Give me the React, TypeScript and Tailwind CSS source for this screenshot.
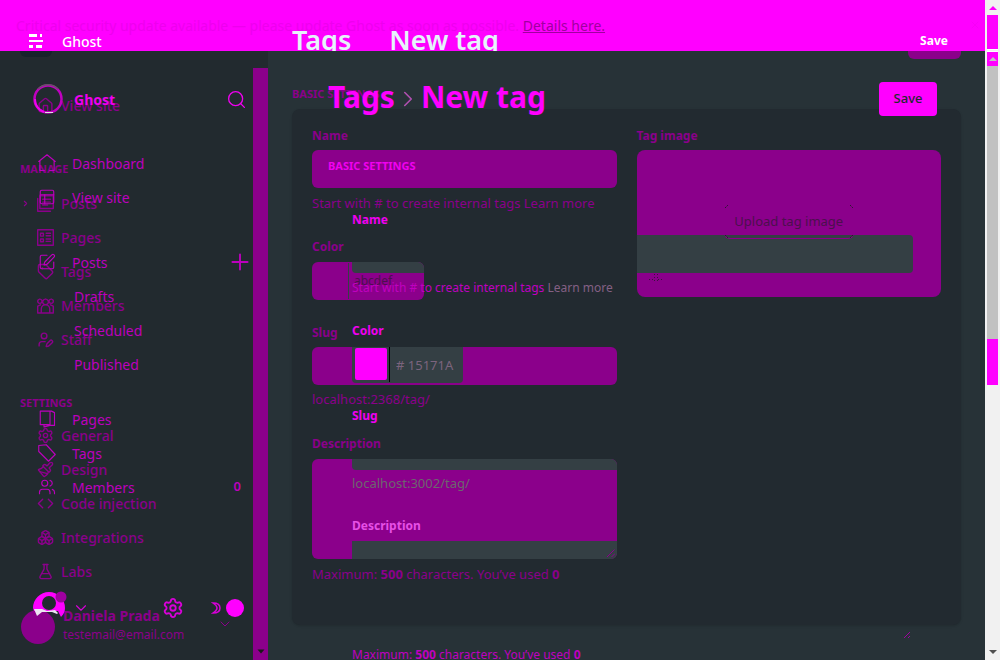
import type { ComponentType, ReactNode } from "react";
import {
  Boxes,
  ChevronDown,
  ChevronRight,
  Code,
  FlaskConical,
  House,
  Paintbrush,
  PanelsTopLeft,
  Plus,
  Search,
  Settings,
  SquarePen,
  Tag,
  UserPen,
  Users,
  X,
} from "lucide-react";

type IconProps = { size?: number; strokeWidth?: number; className?: string };
type Item = { label: string; Icon?: ComponentType<IconProps>; chevron?: boolean; extra?: ReactNode };

function glyph(d: string): ComponentType<IconProps> {
  return function Glyph({ size = 16, strokeWidth = 1.5, className }: IconProps) {
    return (
      <svg
        width={size}
        height={size}
        viewBox="0 0 24 24"
        fill="none"
        stroke="currentColor"
        strokeWidth={strokeWidth}
        strokeLinejoin="round"
        strokeLinecap="round"
        className={className}
      >
        <path d={d} />
      </svg>
    );
  };
}

const HomeOutline = glyph("M1 10 12 1l11 9M2.500 9v13h6M21.500 9v13h-6");
const PagesOutline = glyph("M3 1.500h13v18H3zM8 1.500h10l4 2v17h-5M8 19.500v3l8-2");
const TagOutline = glyph("M1 2 11 1l12 13-9 9L1 10z");
const PostStack = glyph("M4 1h19v18H4zM1 5v18h18M8 6h11M8 10h11M8 14h7");
const FramedList = glyph("M1 1h22v22H1zM5 6h4v4H5zM5 14h4v4H5zM13 6h6M13 9.500h6M13 14h6M13 17.500h6");
const Crowd = glyph(
  "M12 3a4 4 0 1 0 .1 0M4 3a3 3 0 1 0 .1 0M20 3a3 3 0 1 0 .1 0M6 22v-5a6 6 0 0 1 12 0v5M1 22V13l4-2M23 22V13l-4-2M1 22.500h22"
);

const manage: Item[] = [
  { label: "Posts", Icon: PostStack, chevron: true },
  { label: "Pages", Icon: FramedList },
  { label: "Tags", Icon: Tag },
  { label: "Members", Icon: Crowd },
  { label: "Staff", Icon: UserPen },
];

const settings: Item[] = [
  { label: "General", Icon: Settings },
  { label: "Design", Icon: Paintbrush },
  { label: "Code injection", Icon: Code },
  { label: "Integrations", Icon: Boxes },
  { label: "Labs", Icon: FlaskConical },
];

const posts: Item[] = [
  { label: "Posts", Icon: SquarePen, extra: <Plus size={26} strokeWidth={1.75} className="-mr-1" /> },
  { label: "Drafts" },
  { label: "Scheduled" },
  { label: "Published" },
];

const library: Item[] = [
  { label: "Pages", Icon: PagesOutline },
  { label: "Tags", Icon: TagOutline },
  { label: "Members", Icon: Users, extra: <span className="pr-2 text-[13px] font-semibold">0</span> },
];

function BackRow({ label, Icon, chevron }: Item) {
  return (
    <a href="#" className="flex h-[34px] items-center pl-[21px] text-[14px] font-medium">
      <span className="w-4">{chevron && <ChevronRight size={9} strokeWidth={3} />}</span>
      {Icon && <Icon size={17} strokeWidth={2} />}
      <span className="pl-[7px]">{label}</span>
    </a>
  );
}

function FrontRow({ label, Icon, extra }: Item) {
  return (
    <div className="flex h-[34px] items-center justify-between pr-1 pl-[38px]">
      <a href="#" className="flex items-center text-[14px]">
        {Icon ? <Icon size={18} strokeWidth={1.5} className="mr-4" /> : <span className="w-9" />}
        {label}
      </a>
      {extra}
    </div>
  );
}

function Banner() {
  return (
    <div className="grid h-[51px] grid-cols-1 overflow-hidden bg-[#ff00ff]">
      <div className="flex h-[50px] items-center justify-between pr-1 pl-4 text-[14px] text-[#ee00ee] [grid-area:1/1]">
        <p className="whitespace-nowrap">
          Critical security update available — please update Ghost as soon as possible.{" "}
          <a href="#" className="text-[#a000a0] underline">
            Details here.
          </a>
        </p>
        <button aria-label="Dismiss">
          <X size={12} strokeWidth={1} />
        </button>
      </div>
      <header className="flex items-start text-white [grid-area:1/1]">
        <div className="flex h-5 w-[292px] items-center gap-[19px] pl-7 text-[14px] font-medium mt-[31px]">
          <svg width="15" height="14" viewBox="0 0 15 14" fill="currentColor">
            <path d="M1 0h8v3H1zM12 0h2v3h-2zM1 6h14v2H1zM1 11h4v3H1zM8 11h6v3H8z" />
          </svg>
          <span>Ghost</span>
        </div>
        <h1 className="flex grow gap-[38px] pt-[23px] text-[27px] leading-[34px] font-semibold text-[#e6f3fa]">
          <span>Tags</span>
          <span>New tag</span>
        </h1>
        <button className="mt-[31px] mr-6 h-5 w-[54px] text-[12px] leading-5 font-bold">Save</button>
      </header>
    </div>
  );
}

function BackSidebar() {
  return (
    <aside className="flex w-[268px] shrink-0 justify-between bg-[#222a2f] text-[#8b008b]">
      <nav className="flex grow flex-col">
        <div className="ml-5 h-[6px] w-8 rounded-b-md bg-[#17222b]" />
        <div className="pt-[31px]">
          <BackRow label="View site" Icon={House} />
        </div>
        <h2 className="pt-10 pl-5 text-[11px] leading-[14px] font-bold">MANAGE</h2>
        <div className="pt-[10px]">
          {manage.map((item) => (
            <BackRow key={item.label} {...item} />
          ))}
        </div>
        <h2 className="pt-10 pl-5 text-[11px] leading-[14px] font-bold">SETTINGS</h2>
        <div className="pt-2">
          {settings.map((item) => (
            <BackRow key={item.label} {...item} />
          ))}
        </div>
        <div className="mt-[22px] flex items-center gap-2 pl-[21px]">
          <span className="size-[34px] rounded-full bg-[#8b008b]" />
          <div className="-mt-1">
            <p className="text-[14px] leading-[19px] font-bold">Daniela Prada</p>
            <p className="text-[12px] leading-[19px]">testemail@email.com</p>
          </div>
        </div>
      </nav>
      <div className="mt-[17px] flex w-[15px] items-end justify-center bg-[#8b008b] pb-[6px] text-[#1a1a1a]">
        <svg width="8" height="5" viewBox="0 0 8 5">
          <path d="M0.500 .5h7L4 4.500z" fill="currentColor" />
        </svg>
      </div>
    </aside>
  );
}

function Label({ id, children }: { id: string; children: ReactNode }) {
  return (
    <label htmlFor={id} className="block text-[12px] leading-[18px] font-bold">
      {children}
    </label>
  );
}

function BackMain() {
  return (
    <main className="min-w-0 grow bg-[#273237] px-6 text-[#8b008b]">
      <div className="ml-auto h-2 w-[53px] rounded-b-md bg-[#8b008b]" />
      <h2 className="pt-7 pb-2 text-[11px] leading-[14px] font-bold">BASIC SETTINGS</h2>
      <section className="grid grid-cols-2 items-start gap-5 rounded-lg bg-[#222a30] px-5 pt-[18px] pb-[42px] shadow-sm">
        <div>
          <Label id="name">Name</Label>
          <input id="name" className="mt-[5px] block h-[38px] w-full rounded-md bg-[#8b008b] px-3" />
          <p className="pt-[6px] text-[13px] leading-[18px] whitespace-nowrap">
            Start with # to create internal tags <a href="#">Learn more</a>
          </p>
          <div className="pt-[26px]">
            <Label id="color">Color</Label>
          </div>
          <div className="mt-[6px] flex h-[38px] w-28 overflow-hidden rounded-md bg-[#8b008b]">
            <span className="m-px w-9 border-r border-[#343f44]" />
            <div className="grow">
              <div className="ml-[2px] h-[11px] rounded-bl-sm bg-[#343f44]" />
              <input id="color" defaultValue="abcdef" className="block h-4 w-16 bg-transparent pl-1 text-[12px] text-[#4b104d]" />
            </div>
          </div>
          <div className="pt-6">
            <Label id="slug">Slug</Label>
          </div>
          <input id="slug" className="mt-[5px] block h-[38px] w-full rounded-md bg-[#8b008b] px-3" />
          <p className="pt-[5px] text-[13px] leading-[18px]">localhost:2368/tag/</p>
          <div className="pt-[27px]">
            <Label id="description">Description</Label>
          </div>
          <div className="mt-[6px] grid h-[100px] overflow-hidden rounded-md bg-[#8b008b]">
            <div className="ml-10 flex flex-col justify-between [grid-area:1/1]">
              <span className="h-[11px] rounded-bl-sm bg-[#343f44]" />
              <span className="flex h-[18px] items-end justify-end bg-[#343f44] p-[2px]">
                <svg width="8" height="8" viewBox="0 0 8 8" fill="none" stroke="#8b008b">
                  <path d="M0 8 7.500 .5M4.500 8 8 4.500" />
                </svg>
              </span>
            </div>
            <textarea id="description" className="resize-none bg-transparent [grid-area:1/1]" />
          </div>
          <p className="pt-[6px] text-[13px] leading-[18px] whitespace-nowrap">
            Maximum: <b>500</b> characters. You’ve used <b>0</b>
          </p>
        </div>
        <div>
          <h3 className="text-[12px] leading-[18px] font-bold">Tag image</h3>
          <div className="mt-[5px] grid h-[147px] overflow-hidden rounded-lg bg-[#8b008b]">
            <div className="mt-[85px] mr-7 h-[38px] rounded-r-sm bg-[#343f44] [grid-area:1/1]" />
            <button className="mt-[55px] flex h-[34px] w-[130px] items-center justify-center justify-self-center rounded-md border-b border-[#8b008b] text-[13px] whitespace-nowrap text-[#4b104d] [grid-area:1/1]">
              Upload tag image
            </button>
            <svg
              width="130"
              height="36"
              viewBox="0 0 130 36"
              className="mt-[54px] justify-self-center [grid-area:1/1]"
              fill="none"
              stroke="#2a182e"
              strokeDasharray="2 1"
            >
              <path d="M1 4 4 1M126 1l3 3M1 31l3 3M129 31l-3 3" />
            </svg>
            <svg
              width="14"
              height="10"
              viewBox="0 0 14 10"
              className="mb-[14px] ml-3 self-end [grid-area:1/1]"
              fill="none"
              stroke="#3a143d"
              strokeDasharray="1 2"
            >
              <path d="M0 6.500h5M9 6.500h5M5.500 1v8M8.500 1v8" />
            </svg>
          </div>
        </div>
      </section>
    </main>
  );
}

function FrontSidebar() {
  return (
    <nav className="flex w-[253px] shrink-0 flex-col text-[#bd00bd]">
      <div className="flex h-[34px] items-center pr-[6px] pl-8 text-[#f000f0]">
        <svg width="32" height="32" viewBox="0 0 32 32" fill="none">
          <circle cx="16" cy="16" r="13.500" stroke="#c000c0" strokeWidth="2.500" />
          <path d="M6 6a14 14 0 0 1 20 0" stroke="#695069" strokeWidth="1.500" />
          <path d="M3 16a13 13 0 0 0 9 13" stroke="#f000f0" strokeWidth="2" />
          <path d="M13 29.500h8" stroke="#e4dbe4" />
        </svg>
        <span className="grow pl-[10px] text-[14px] font-bold">Ghost</span>
        <button aria-label="Search">
          <Search size={21} strokeWidth={1.5} />
        </button>
      </div>
      <div className="pt-[30px]">
        <FrontRow label="Dashboard" Icon={HomeOutline} />
        <FrontRow label="View site" Icon={PanelsTopLeft} />
      </div>
      <div className="pt-[31px]">
        {posts.map((item) => (
          <FrontRow key={item.label} {...item} />
        ))}
      </div>
      <div className="pt-[21px]">
        {library.map((item) => (
          <FrontRow key={item.label} {...item} />
        ))}
      </div>
      <div className="mt-auto flex h-[69px] items-start pl-[33px] text-[#d800d8]">
        <svg width="35" height="30" viewBox="0 0 35 30">
          <path d="M0 17a16 16 0 1 1 32 0c0 3-1 6-4 9l-3-6H1z" fill="#ff00ff" />
          <ellipse cx="16" cy="12" rx="7" ry="7" fill="#222a2f" />
          <path d="M1 18h8l5 2 8-1 3 3-1 1-5-2H9l-5 4z" fill="#ece4f2" />
          <circle cx="28" cy="6" r="5.500" fill="#a000a0" />
        </svg>
        <ChevronDown size={18} strokeWidth={1.5} className="mt-2 ml-1" />
        <Settings size={22} strokeWidth={2} className="mt-[6px] ml-[72px]" />
        <svg width="10" height="12" viewBox="0 0 10 12" className="mt-[11px] ml-[27px]" fill="none" stroke="currentColor" strokeWidth="1.500">
          <path d="M2 1c6 0 7 3 7 5s-1 5-7 5c3-2 4-3 4-5S5 3 2 1z" />
        </svg>
        <div className="ml-1 flex w-5 flex-col items-center pt-2">
          <span className="size-[18px] rounded-full bg-[#ff00ff]" />
          <ChevronDown size={16} strokeWidth={1.5} className="-mt-px mr-5 text-[#8b008b]" />
        </div>
      </div>
    </nav>
  );
}

function FrontMain() {
  return (
    <div className="min-w-0 grow pr-12 pl-[75px] text-[#c000c0]">
      <div className="flex h-[34px] justify-between">
        <h1 className="flex items-center text-[30px] leading-[30px] font-bold text-[#ff00ff] -mt-[5px]">
          Tags
          <ChevronRight size={26} strokeWidth={1.5} className="mt-1 text-[#b050b0]" />
          New tag
        </h1>
        <button className="h-[34px] w-[58px] rounded-sm bg-[#ff00ff] text-[13px] font-medium text-[#222a2f]">Save</button>
      </div>
      <h2 className="pt-[43px] text-[11px] leading-[14px] font-bold text-[#f000f0]">BASIC SETTINGS</h2>
      <div className="pt-[38px] pl-6">
        <p className="text-[12px] leading-[18px] font-bold text-[#f000f0]">Name</p>
        <p className="pt-[50px] text-[12px] leading-[18px] whitespace-nowrap">
          Start with # to create internal tags{" "}
          <a href="#" className="text-[#846084]">
            Learn more
          </a>
        </p>
        <div className="pt-[25px] text-[#f000f0]">
          <Label id="front-color">Color</Label>
        </div>
        <div className="mt-[7px] flex h-9 w-[111px] items-start rounded-b-sm bg-[#343f44]">
          <span className="mt-px ml-[3px] h-8 w-8 rounded-xs bg-[#ff00ff]" />
          <input
            id="front-color"
            defaultValue="# 15171A"
            className="ml-[2px] h-[35px] w-[74px] border-l border-black bg-transparent pl-[6px] text-[13px] text-[#7c647e]"
          />
        </div>
        <p className="pt-6 text-[12px] leading-[18px] font-bold text-[#f000f0]">Slug</p>
        <p className="pt-[49px] text-[13px] leading-[18px] text-[#6d666f]">localhost:3002/tag/</p>
        <p className="pt-[25px] text-[12px] leading-[18px] font-bold text-[#e650e6]">Description</p>
        <div className="flex h-[104px] items-end justify-end pr-[26px]">
          <svg width="8" height="8" viewBox="0 0 8 8" fill="none" stroke="#a000a0">
            <path d="M1 7 7 1M5 7l2-2" />
          </svg>
        </div>
        <p className="pt-[7px] text-[12px] leading-[18px] whitespace-nowrap">
          Maximum: <b>500</b> characters. You’ve used <b>0</b>
        </p>
      </div>
    </div>
  );
}

function Arrow({ down }: { down?: boolean }) {
  return (
    <svg width="8" height="4" viewBox="0 0 8 4" fill="currentColor">
      <path d={down ? "M0 0h8L4 4z" : "M0 4h8L4 0z"} />
    </svg>
  );
}

function Scrollbar() {
  return (
    <div className="flex flex-col items-center bg-[#f1f1f1]">
      <div className="flex h-[15px] items-center text-[#ff00ff]">
        <Arrow />
      </div>
      <div className="h-[34px] w-[11px] bg-[#ff00ff]" />
      <div className="h-[3px] w-[11px] border-y border-white" />
      <div className="flex h-[14px] w-[11px] items-center justify-center bg-[#ff00ff] text-[#c1c1c1]">
        <Arrow />
      </div>
      <div className="h-[273px] w-[11px] bg-[#c1c1c1]" />
      <div className="h-[46px] w-[11px] bg-[#ff00ff]" />
      <div className="mt-auto pb-[6px] text-[#505050]">
        <Arrow down />
      </div>
    </div>
  );
}

export default function App() {
  return (
    <div className="grid h-screen grid-cols-[minmax(0,1fr)_15px] overflow-hidden font-['Noto_Sans',sans-serif]">
      <div className="grid min-h-0 grid-cols-1 grid-rows-1 overflow-hidden bg-[#273237]">
        <div className="flex min-h-0 min-w-0 flex-col [grid-area:1/1]">
          <Banner />
          <div className="flex min-h-0 grow">
            <BackSidebar />
            <BackMain />
          </div>
        </div>
        <div className="z-10 flex min-h-0 min-w-0 pt-[82px] [grid-area:1/1]">
          <FrontSidebar />
          <FrontMain />
        </div>
      </div>
      <Scrollbar />
    </div>
  );
}
